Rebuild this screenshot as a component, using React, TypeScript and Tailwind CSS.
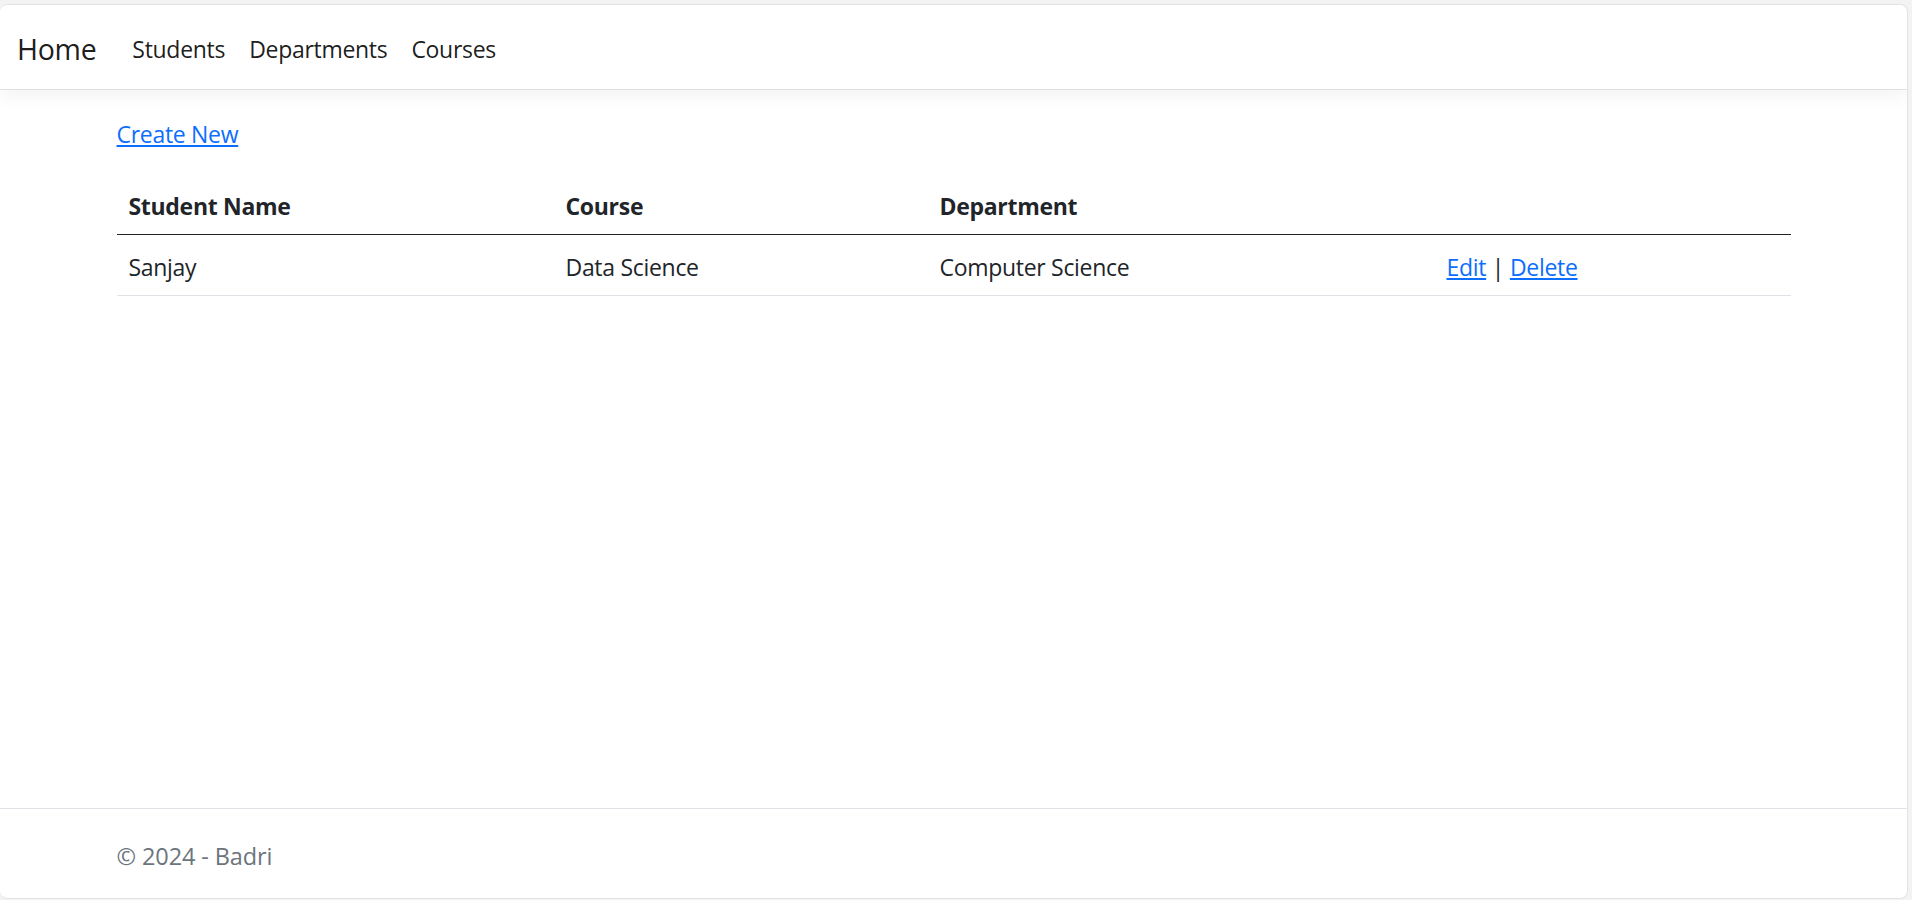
export default function App() {
  const font = { fontFamily: '"Open Sans", "Noto Sans", sans-serif' };
  const cell = "px-[12px] pt-[14px] pb-[10px]";
  return (
    <div className="w-[1912px] h-[900px] bg-[#f3f3f3] pt-[4px] pr-[4px] overflow-hidden" style={font}>
      <div className="h-[895px] bg-white border border-l-0 border-[#e3e3e3] rounded-[8px] flex flex-col overflow-hidden text-[#212529]">
        {/* Navbar */}
        <header className="h-[85px] shrink-0 border-b border-[#dee2e6] bg-white shadow-[0_6px_18px_rgba(0,0,0,0.05)] flex items-center px-[17px] pt-[4px]">
          <a href="#" className="text-[28.5px] leading-[45px] tracking-[-0.3px] text-black/90 mr-[24px]">Home</a>
          <nav className="flex">
            <a href="#" className="px-[12px] text-[23px] leading-[36px] tracking-[-0.3px] text-black/90">Students</a>
            <a href="#" className="px-[12px] text-[23px] leading-[36px] tracking-[-0.3px] text-black/90">Departments</a>
            <a href="#" className="px-[12px] text-[23px] leading-[36px] tracking-[-0.3px] text-black/90">Courses</a>
          </nav>
        </header>

        {/* Main */}
        <main className="flex-1">
          <div className="w-[1674px] mx-auto pt-[26px] text-[23px] tracking-[-0.3px]">
            <p className="mb-[22px] leading-[36px]">
              <a href="#" className="text-[#0d6efd] underline">Create New</a>
            </p>
            <table className="w-full leading-[36px] border-collapse">
              <colgroup>
                <col className="w-[437px]" />
                <col className="w-[374px]" />
                <col className="w-[507px]" />
                <col />
              </colgroup>
              <thead>
                <tr className="border-b border-[#212529]">
                  <th className={`text-left font-bold ${cell}`}>Student Name</th>
                  <th className={`text-left font-bold ${cell}`}>Course</th>
                  <th className={`text-left font-bold ${cell}`}>Department</th>
                  <th className={cell}></th>
                </tr>
              </thead>
              <tbody>
                <tr className="border-b border-[#dee2e6]">
                  <td className={cell}>Sanjay</td>
                  <td className={cell}>Data Science</td>
                  <td className={cell}>Computer Science</td>
                  <td className={cell}>
                    <a href="#" className="text-[#0d6efd] underline">Edit</a> |{" "}
                    <a href="#" className="text-[#0d6efd] underline">Delete</a>
                  </td>
                </tr>
              </tbody>
            </table>
          </div>
        </main>

        {/* Footer */}
        <footer className="h-[90px] shrink-0 border-t border-[#dee2e6]">
          <div className="w-[1674px] mx-auto pt-[3px] text-[23.5px] tracking-[-0.1px] leading-[88px] text-[#6c757d]">
            © 2024 - Badri
          </div>
        </footer>
      </div>
    </div>
  );
}
